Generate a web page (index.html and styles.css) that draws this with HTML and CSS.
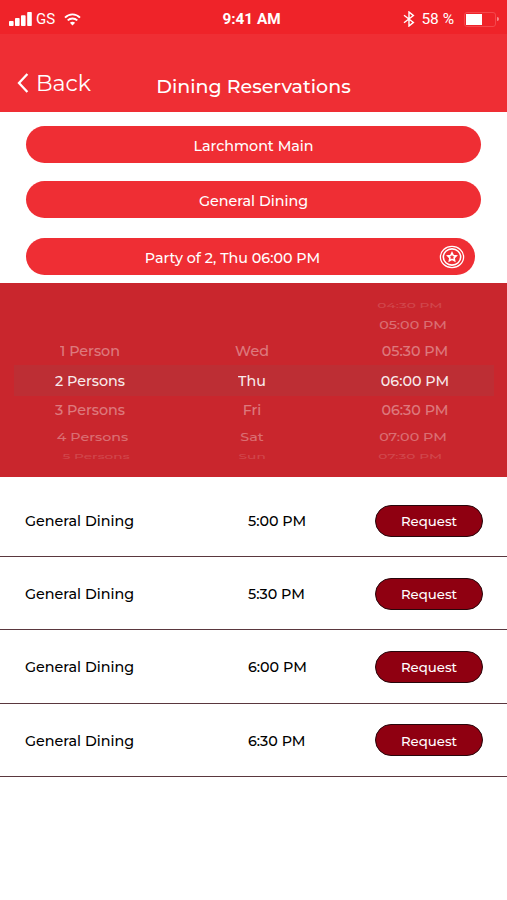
FILE: index.html
```
<!DOCTYPE html>
<html lang="en">

<head>
    <meta charset="UTF-8">
    <meta name="viewport" content="width=device-width, initial-scale=1.0">
    <title>Dining Reservations</title>
    <link rel="stylesheet" href="styles.css">
</head>
<body>
    <div class="status-bar">
        <div class="status-left">
            <svg class="signal-icon" width="23" height="14" viewBox="0 0 23 14" fill="#fff">
                <rect x="0" y="9" width="4.6" height="5" rx="0.8"/>
                <rect x="6" y="6" width="4.6" height="8" rx="0.8"/>
                <rect x="12" y="3.2" width="4.6" height="10.8" rx="0.8"/>
                <rect x="18.2" y="0" width="4.6" height="14" rx="0.8"/>
            </svg>
            <span class="carrier">GS</span>
            <svg class="wifi-icon" width="17" height="13" viewBox="0 0 17 13" fill="none" stroke="#fff" stroke-width="1.9">
                <path d="M1 4.6C5.2 0.3 11.8 0.3 16 4.6"/>
                <path d="M3.7 7.4C6.4 4.8 10.6 4.8 13.3 7.4"/>
                <path d="M8.5 12.6L5.9 9.8C7.3 8.4 9.7 8.4 11.1 9.8Z" fill="#fff" stroke="none"/>
            </svg>
        </div>
        <div class="clock">9:41 AM</div>
        <div class="status-right">
            <svg class="bluetooth-icon" width="12" height="16" viewBox="0 0 12 16" fill="none" stroke="#fff" stroke-width="1.4">
                <path d="M1 4.2L10.4 11.4L6 15V1L10.4 4.6L1 11.8"/>
            </svg>
            <span class="percent">58 %</span>
            <div class="battery">
                <div class="battery-level"></div>
            </div>
            <div class="battery-tip"></div>
        </div>
    </div>

    <div class="header">
        <div class="back">
            <svg width="12" height="20" viewBox="0 0 12 20" fill="none" stroke="#fff" stroke-width="2.3">
                <path d="M10.4 1L2 10L10.4 19"/>
            </svg>
            <span class="back-label">Back</span>
        </div>
        <div class="title">Dining Reservations</div>
    </div>

    <div class="filters">
        <div class="pill">Larchmont Main</div>
        <div class="pill">General Dining</div>
        <div class="pill pill-party">
            <span class="party-label">Party of 2, Thu 06:00 PM</span>
            <svg class="badge-icon" width="26" height="24" viewBox="0 0 26 24" fill="none" stroke="#fff">
                <ellipse cx="13" cy="12" rx="11.6" ry="10.7" stroke-width="1.3"/>
                <ellipse cx="13" cy="12" rx="8.7" ry="8.1" stroke-width="1.6"/>
                <path d="M13 7.8L14.3 10.5L17.2 10.9L15.1 12.9L15.6 15.7L13 14.3L10.4 15.7L10.9 12.9L8.8 10.9L11.7 10.5Z" stroke-width="1.6"/>
            </svg>
        </div>
    </div>

    <div class="picker">
        <div class="picker-col people">
            <div class="item far-up"></div>
            <div class="item mid-up"></div>
            <div class="item near-up"><span>1 Person</span></div>
            <div class="item selected"><span>2 Persons</span></div>
            <div class="item near-down"><span>3 Persons</span></div>
            <div class="item mid-down"><span>4 Persons</span></div>
            <div class="item far-down"><span>5 Persons</span></div>
        </div>
        <div class="picker-col days">
            <div class="item far-up"></div>
            <div class="item mid-up"></div>
            <div class="item near-up"><span>Wed</span></div>
            <div class="item selected"><span>Thu</span></div>
            <div class="item near-down"><span>Fri</span></div>
            <div class="item mid-down"><span>Sat</span></div>
            <div class="item far-down"><span>Sun</span></div>
        </div>
        <div class="picker-col times">
            <div class="item far-up"><span>04:30 PM</span></div>
            <div class="item mid-up"><span>05:00 PM</span></div>
            <div class="item near-up"><span>05:30 PM</span></div>
            <div class="item selected"><span>06:00 PM</span></div>
            <div class="item near-down"><span>06:30 PM</span></div>
            <div class="item mid-down"><span>07:00 PM</span></div>
            <div class="item far-down"><span>07:30 PM</span></div>
        </div>
    </div>

    <div class="results">
        <div class="row">
            <span class="place">General Dining</span>
            <span class="time">5:00 PM</span>
            <button class="request">Request</button>
        </div>
        <div class="row">
            <span class="place">General Dining</span>
            <span class="time">5:30 PM</span>
            <button class="request">Request</button>
        </div>
        <div class="row">
            <span class="place">General Dining</span>
            <span class="time">6:00 PM</span>
            <button class="request">Request</button>
        </div>
        <div class="row">
            <span class="place">General Dining</span>
            <span class="time">6:30 PM</span>
            <button class="request">Request</button>
        </div>
    </div>
</body>
</html>
```

FILE: styles.css
```
* {
    box-sizing: border-box;
}
body {
    margin: 0;
    padding: 0;
    background-color: #fff;
    font-family: Montserrat, Inter, sans-serif;
    font-size: 14.3px;
    font-weight: 500;
    color: #111;
}
.status-bar {
    display: grid;
    grid-template-columns: 1fr auto 1fr;
    align-items: center;
    height: 34px;
    padding: 4px 8px 0 9px;
    background-color: #ef2329;
    color: #fff;
    font-family: Roboto, sans-serif;
}
.status-left, .status-right {
    display: flex;
    align-items: center;
}
.status-right {
    justify-content: flex-end;
}
.carrier {
    margin-left: 4px;
    font-size: 15px;
    font-weight: 400;
}
.wifi-icon {
    margin-left: 9px;
}
.clock {
    margin-right: 5px;
    font-size: 15.3px;
    font-weight: 700;
}
.percent {
    margin: 0 10px 0 6px;
    font-size: 15.5px;
    font-weight: 400;
}
.battery {
    width: 32px;
    height: 15px;
    padding: 1px;
    border: 1px solid #f4474c;
    border-radius: 3px;
}
.battery-level {
    width: 16px;
    height: 11px;
    background-color: #fff;
}
.battery-tip {
    width: 2px;
    height: 4px;
    margin-left: 1px;
    background-color: #f8898b;
    border-radius: 0 2px 2px 0;
}
.header {
    display: grid;
    grid-template-columns: 1fr auto 1fr;
    height: 78px;
    padding: 0 17px;
    background-color: #ef2e34;
    color: #fff;
}
.back {
    display: flex;
    align-items: center;
    height: 98px;
}
.back-label {
    margin-left: 7px;
    font-size: 22px;
    font-weight: 400;
}
.title {
    line-height: 105px;
    font-size: 19px;
}
.filters {
    height: 171px;
    padding: 14px 26px 0;
}
.pill {
    display: flex;
    align-items: center;
    justify-content: center;
    height: 37px;
    margin-bottom: 18px;
    padding-top: 2px;
    background-color: #ef2e34;
    border-radius: 19px;
    color: #fff;
}
.pill-party {
    display: grid;
    grid-template-columns: 36px 1fr 36px;
    margin: 20px 6px 0 0;
    text-align: center;
}
.party-label {
    grid-column: 2;
    margin-right: 36px;
}
.badge-icon {
    margin-top: -2px;
}
.picker {
    display: grid;
    grid-template-columns: repeat(3, 162px);
    height: 194px;
    padding: 17px 12px 0 9px;
    background: linear-gradient(#bd2e34, #bd2e34) 14px 82px / 480px 31px no-repeat #c9262d;
    color: #fff;
}
.item {
    display: flex;
    align-items: center;
    justify-content: center;
    white-space: nowrap;
}
.selected {
    height: 31px;
    opacity: 0.9;
}
.near-up, .near-down {
    opacity: 0.38;
}
.near-up {
    height: 26px;
}
.near-down {
    height: 30px;
}
.mid-up, .mid-down {
    opacity: 0.33;
}
.mid-up {
    height: 26px;
}
.mid-down {
    height: 24px;
}
.mid-up span, .mid-down span {
    transform: scaleY(0.8);
}
.selected span {
    padding-top: 2px;
}
.far-up, .far-down {
    opacity: 0.15;
}
.far-up {
    height: 12px;
}
.far-down {
    height: 16px;
}
.far-up span, .far-down span {
    transform: scale(0.96, 0.48);
}
.people .mid-down {
    padding-left: 5px;
}
.people .far-down {
    padding-left: 12px;
}
.times .near-up, .times .selected, .times .near-down {
    padding-left: 2px;
}
.times .mid-up, .times .mid-down {
    padding-right: 2px;
}
.times .far-up, .times .far-down {
    padding-right: 8px;
}
.row {
    display: grid;
    grid-template-columns: 223px 127px 108px;
    align-items: center;
    padding: 1px 25px 0;
    height: 73.3px;
    border-bottom: 1px solid #5a373e;
}
.row:first-child {
    height: 80px;
    padding-top: 8px;
}
.place, .time {
    padding-top: 1px;
    color: #000;
}
.request {
    height: 32px;
    padding: 1px 0 0;
    background-color: #8f0011;
    border: 1.5px solid #27060b;
    border-radius: 16px;
    color: #fff;
    font-family: inherit;
    font-size: 13.3px;
    font-weight: 500;
}
```
